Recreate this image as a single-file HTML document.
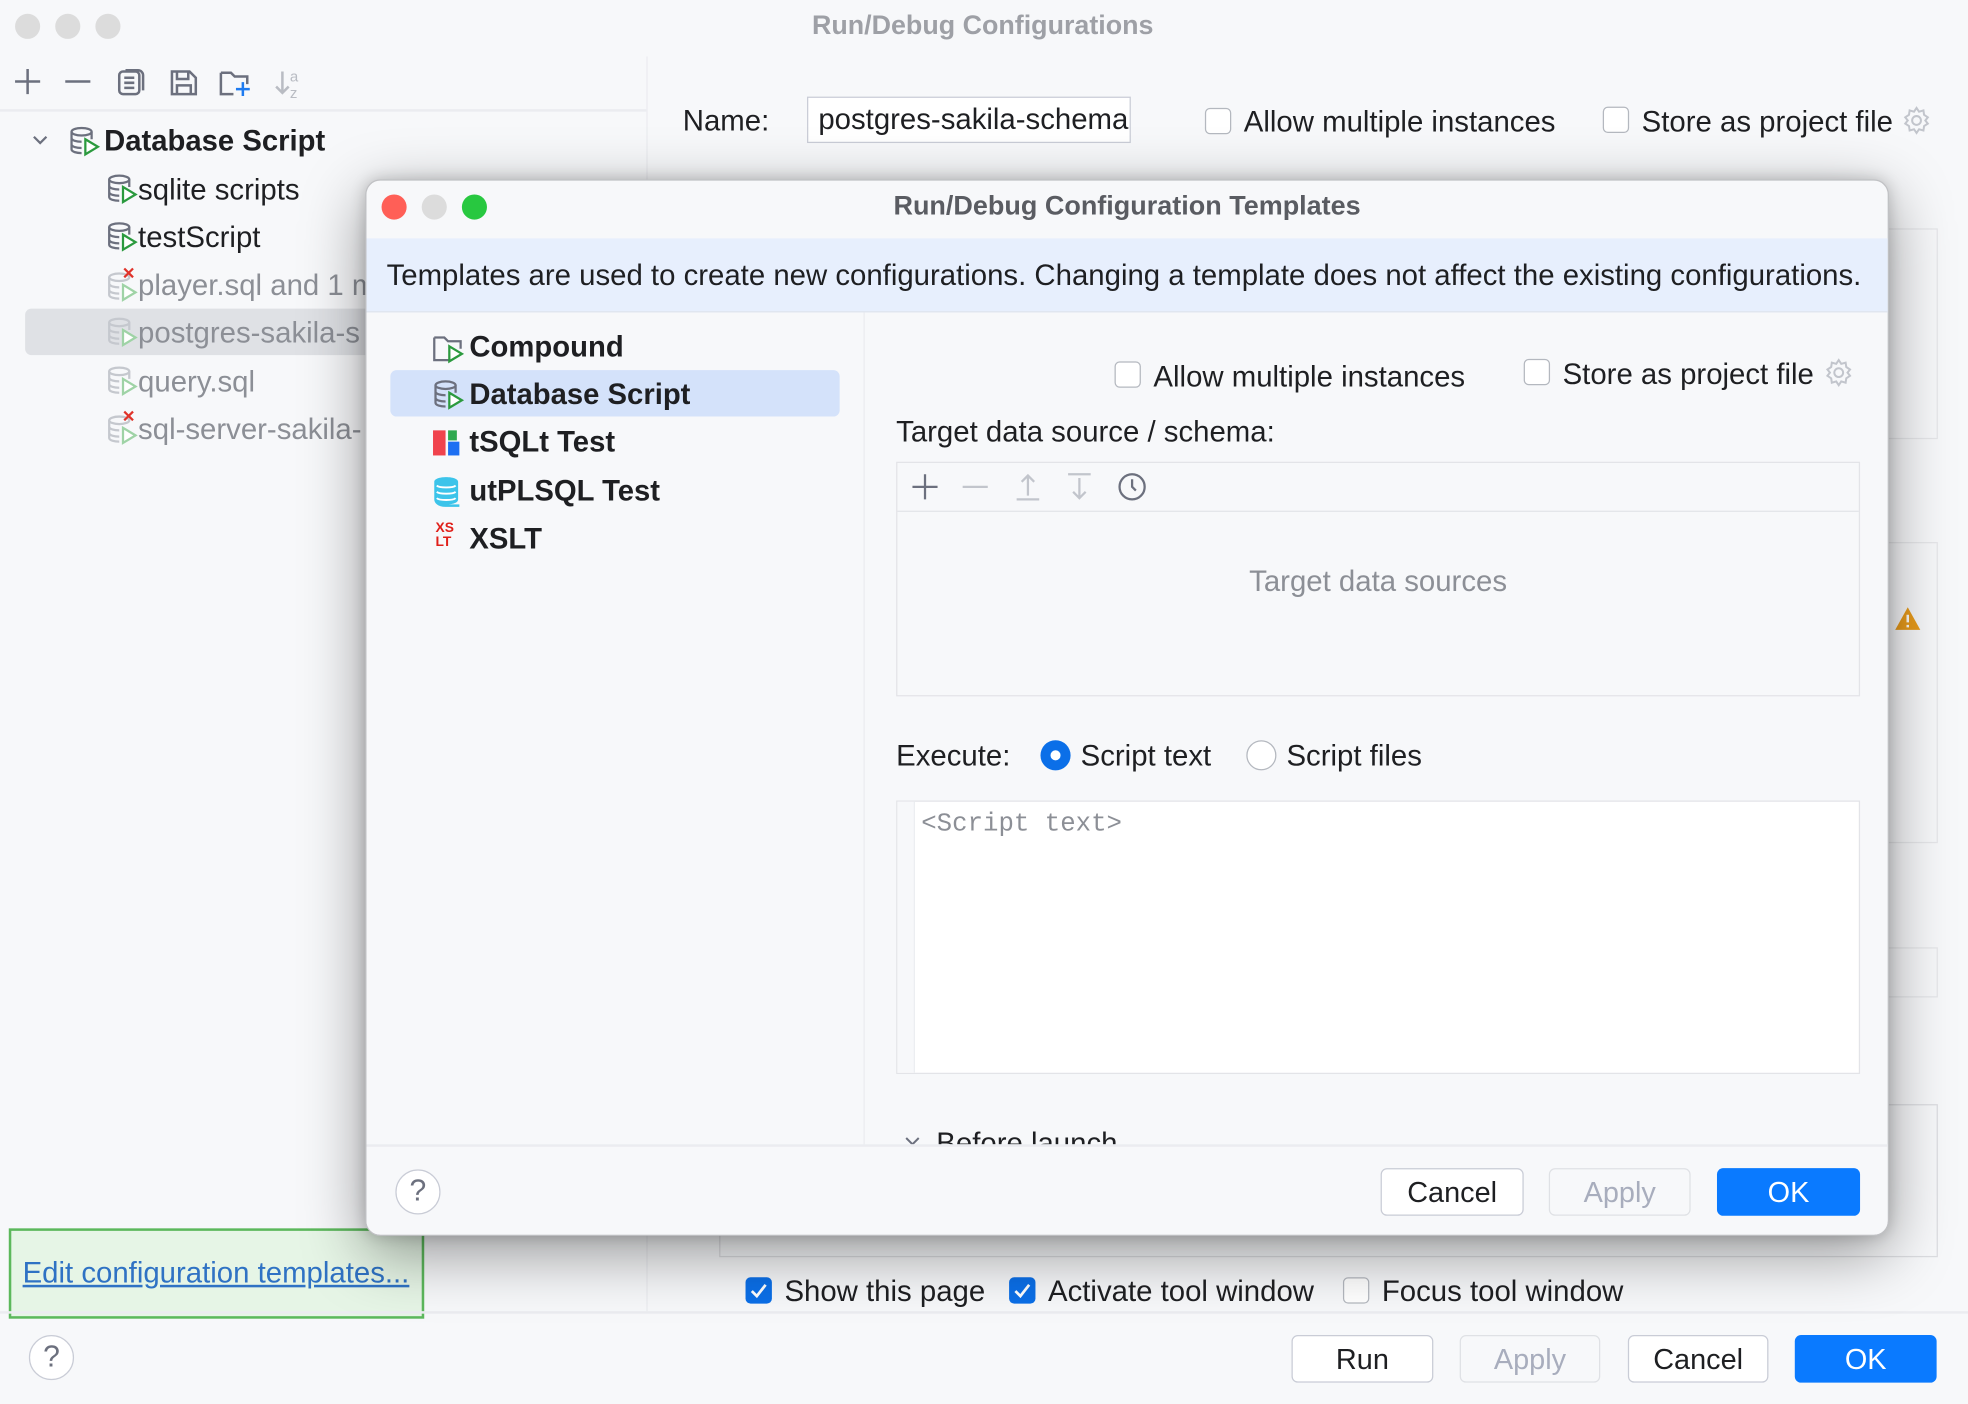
<!DOCTYPE html>
<html><head><meta charset="utf-8"><style>
*{margin:0;padding:0;box-sizing:border-box}
html,body{width:1968px;height:1404px;overflow:hidden;background:#f7f8fa}
#s{position:absolute;left:0;top:0;width:1568px;height:1119px;transform:scale(1.2551,1.2547);transform-origin:0 0;font-family:"Liberation Sans",sans-serif;color:#1e1f22;background:#f7f8fa;overflow:hidden}
.a{position:absolute}
.t{position:absolute;line-height:1;white-space:nowrap;font-size:23.4px}
.b{font-weight:bold;font-size:23.3px}
.cb{position:absolute;width:21px;height:21px;border:1.5px solid #b4b8bf;border-radius:4px;background:#fff}
.cbc{position:absolute;width:21px;height:21px;border-radius:4px;background:#0b6fe8}
.btn{position:absolute;height:38px;border:1px solid #c9ccd6;border-radius:5px;background:#fff;font-size:23px;line-height:36px;text-align:center}
.dis{background:#f7f8fa;color:#a8adbd;border-color:#dfe1e5}
.ok{background:#0a7aff;color:#fff;border:none;line-height:38px}
.help{position:absolute;width:36px;height:36px;border:1.5px solid #c9ccd6;border-radius:50%;background:#fff;text-align:center;font-size:24px;line-height:33px;color:#6c707e}
.tl{position:absolute;width:20px;height:20px;border-radius:50%}
</style></head><body><div id="s">

<div class="tl" style="left:12px;top:11px;background:#dcdcdc"></div>
<div class="tl" style="left:44px;top:11px;background:#dcdcdc"></div>
<div class="tl" style="left:76px;top:11px;background:#dcdcdc"></div>
<div class="t b" style="left:0;width:1566px;text-align:center;top:10px;font-size:21.4px;color:#9ea0a6">Run/Debug Configurations</div>

<div class="a" style="left:515px;top:45px;width:1px;height:1000px;background:#ebecf0"></div>
<div class="a" style="left:0;top:87px;width:515px;height:2px;background:#ebecf0"></div>

<svg class="a" style="left:0;top:48px" width="260" height="34" fill="none" stroke="#6c707e" stroke-width="2">
<path d="M12 17h20M22 7v20"/><path d="M52 17h20"/>
<rect x="95" y="9" width="16" height="18" rx="3"/><path d="M100 8h10a4 4 0 0 1 4 4v12"/><path d="M99 14h8M99 18h8M99 22h8"/>
<path d="M137 9h14l5 5v13h-19z"/><path d="M141 9v6h9V9M141 27v-7h11v7"/>
<path d="M176 10h8l3 3h10v6M186 27h-10V10"/><path d="M188 23h11M193.5 17.5v11" stroke="#1e7bf0"/>
<path d="M225 9v17m-5-5 5 5 5-5" stroke="#b9bcc3"/><text x="231" y="17" font-size="12" fill="#b9bcc3" stroke="none" font-family="Liberation Sans">a</text><text x="231" y="30" font-size="12" fill="#b9bcc3" stroke="none" font-family="Liberation Sans">z</text>
</svg>

<svg class="a" style="left:24px;top:104px" width="16" height="16" fill="none" stroke="#6c707e" stroke-width="1.8"><path d="M3 5l5 5 5-5"/></svg>
<svg class="a" style="left:54px;top:100px" width="28" height="26"><g fill="none" stroke="#6c707e" stroke-width="1.8"><ellipse cx="11" cy="5" rx="8" ry="3"/><path d="M3 5v14c0 2 4 3 8 3M19 5v6M3 10c0 2 4 3 8 3M3 15c0 2 4 3 8 3"/></g><path d="M14 11l10 6-10 6z" fill="#fff" stroke="#2b9a3e" stroke-width="1.8"/></svg>
<div class="t b" style="left:83px;top:101px">Database Script</div>

<div class="a" style="left:20px;top:246px;width:300px;height:37px;background:#dfe1e5;border-radius:5px"></div>

<svg class="a" style="left:84px;top:138px" width="28" height="26"><g fill="none" stroke="#6c707e" stroke-width="1.8"><ellipse cx="11" cy="5" rx="8" ry="3"/><path d="M3 5v14c0 2 4 3 8 3M19 5v6M3 10c0 2 4 3 8 3M3 15c0 2 4 3 8 3"/></g><path d="M14 11l10 6-10 6z" fill="#fff" stroke="#2b9a3e" stroke-width="1.8"/></svg>
<div class="t" style="left:110px;top:140px">sqlite scripts</div>
<svg class="a" style="left:84px;top:176px" width="28" height="26"><g fill="none" stroke="#6c707e" stroke-width="1.8"><ellipse cx="11" cy="5" rx="8" ry="3"/><path d="M3 5v14c0 2 4 3 8 3M19 5v6M3 10c0 2 4 3 8 3M3 15c0 2 4 3 8 3"/></g><path d="M14 11l10 6-10 6z" fill="#fff" stroke="#2b9a3e" stroke-width="1.8"/></svg>
<div class="t" style="left:110px;top:178px">testScript</div>
<svg class="a" style="left:84px;top:212px" width="28" height="30"><g fill="none" stroke="#c5c8ce" stroke-width="1.8"><ellipse cx="11" cy="9" rx="8" ry="3"/><path d="M3 9v14c0 2 4 3 8 3M3 14c0 2 4 3 8 3M3 19c0 2 4 3 8 3"/></g><path d="M14 15l10 6-10 6z" fill="#fff" stroke="#9fd3a6" stroke-width="1.8"/><path d="M15 2l7 7M22 2l-7 7" stroke="#e0332a" stroke-width="1.8"/></svg>
<div class="t" style="left:110px;top:216px;color:#8c8f96">player.sql and 1 m</div>
<svg class="a" style="left:84px;top:252px" width="28" height="26"><g fill="none" stroke="#c5c8ce" stroke-width="1.8"><ellipse cx="11" cy="5" rx="8" ry="3"/><path d="M3 5v14c0 2 4 3 8 3M19 5v6M3 10c0 2 4 3 8 3M3 15c0 2 4 3 8 3"/></g><path d="M14 11l10 6-10 6z" fill="#fff" stroke="#9fd3a6" stroke-width="1.8"/></svg>
<div class="t" style="left:110px;top:254px;color:#8c8f96">postgres-sakila-s</div>
<svg class="a" style="left:84px;top:291px" width="28" height="26"><g fill="none" stroke="#c5c8ce" stroke-width="1.8"><ellipse cx="11" cy="5" rx="8" ry="3"/><path d="M3 5v14c0 2 4 3 8 3M19 5v6M3 10c0 2 4 3 8 3M3 15c0 2 4 3 8 3"/></g><path d="M14 11l10 6-10 6z" fill="#fff" stroke="#9fd3a6" stroke-width="1.8"/></svg>
<div class="t" style="left:110px;top:293px;color:#8c8f96">query.sql</div>
<svg class="a" style="left:84px;top:326px" width="28" height="30"><g fill="none" stroke="#c5c8ce" stroke-width="1.8"><ellipse cx="11" cy="9" rx="8" ry="3"/><path d="M3 9v14c0 2 4 3 8 3M3 14c0 2 4 3 8 3M3 19c0 2 4 3 8 3"/></g><path d="M14 15l10 6-10 6z" fill="#fff" stroke="#9fd3a6" stroke-width="1.8"/><path d="M15 2l7 7M22 2l-7 7" stroke="#e0332a" stroke-width="1.8"/></svg>
<div class="t" style="left:110px;top:331px;color:#8c8f96">sql-server-sakila-</div>

<div class="t" style="left:544px;top:85px">Name:</div>
<div class="a" style="left:643px;top:77px;width:258px;height:37px;border:1.5px solid #c9ccd6;background:#fff;overflow:hidden"><div class="t" style="left:8px;top:6px">postgres-sakila-schema</div></div>
<div class="cb" style="left:960px;top:86px"></div>
<div class="t" style="left:991px;top:86px">Allow multiple instances</div>
<div class="cb" style="left:1277px;top:85px"></div>
<div class="t" style="left:1308px;top:86px">Store as project file</div>
<svg class="a" style="left:1515px;top:84px" width="24" height="24" fill="none" stroke="#c2c5cc" stroke-width="1.6"><circle cx="12" cy="12" r="3.5"/><path d="M12 2l2 3 3.5-1 .5 3.5 3 2-2 2.5 2 2.5-3 2-.5 3.5-3.5-1-2 3-2-3-3.5 1-.5-3.5-3-2 2-2.5-2-2.5 3-2 .5-3.5 3.5 1z"/></svg>

<div class="a" style="left:1490px;top:182px;width:54px;height:168px;border:1px solid #e6e7ea"></div>
<div class="a" style="left:1490px;top:432px;width:54px;height:240px;border:1px solid #e6e7ea"></div>
<div class="a" style="left:1490px;top:755px;width:54px;height:40px;border:1px solid #e6e7ea"></div>
<svg class="a" style="left:1509px;top:483px" width="22" height="20"><path d="M11 1L21 19H1z" fill="#e89b1c"/><path d="M11 7v6M11 15v2" stroke="#fff" stroke-width="2"/></svg>
<div class="a" style="left:573px;top:880px;width:971px;height:122px;border:1px solid #dcdde1"></div>

<div class="a" style="left:7px;top:979px;width:331px;height:72px;border:2px solid #5cb85c;background:#e6f5e6"></div>
<div class="t" style="left:18px;top:1003px;color:#2f72c4;text-decoration:underline">Edit configuration templates...</div>

<div class="cbc" style="left:594px;top:1018px"></div><svg class="a" style="left:594px;top:1018px" width="21" height="21" fill="none" stroke="#fff" stroke-width="2.2"><path d="M5 11l4 4 7-9"/></svg>
<div class="t" style="left:625px;top:1018px">Show this page</div>
<div class="cbc" style="left:804px;top:1018px"></div><svg class="a" style="left:804px;top:1018px" width="21" height="21" fill="none" stroke="#fff" stroke-width="2.2"><path d="M5 11l4 4 7-9"/></svg>
<div class="t" style="left:835px;top:1018px">Activate tool window</div>
<div class="cb" style="left:1070px;top:1018px"></div>
<div class="t" style="left:1101px;top:1018px">Focus tool window</div>
<div class="a" style="left:0;top:1045px;width:1568px;height:2px;background:#ebecf0"></div>
<div class="help" style="left:23px;top:1064px">?</div>
<div class="btn" style="left:1029px;top:1064px;width:113px">Run</div>
<div class="btn dis" style="left:1163px;top:1064px;width:112px">Apply</div>
<div class="btn" style="left:1297px;top:1064px;width:112px">Cancel</div>
<div class="btn ok" style="left:1430px;top:1064px;width:113px">OK</div>

<div class="a" style="left:291px;top:143px;width:1214px;height:842px;background:#f7f8fa;border-radius:12px;border:1px solid #c0c1c4;box-shadow:0 14px 50px rgba(0,0,0,0.4),0 0 12px rgba(0,0,0,0.18);overflow:hidden">
 <div class="tl" style="left:12px;top:11px;background:#ff5f57"></div>
 <div class="tl" style="left:44px;top:11px;background:#dcdcdc"></div>
 <div class="tl" style="left:76px;top:11px;background:#28c840"></div>
 <div class="t b" style="left:0;width:1212px;text-align:center;top:10px;font-size:21.5px;color:#5a5c62">Run/Debug Configuration Templates</div>
 <div class="a" style="left:0;top:46px;width:1214px;height:59px;background:#e7effd;border-bottom:1px solid #dfe4ee"></div>
 <div class="t" style="left:16px;top:64px">Templates are used to create new configurations. Changing a template does not affect the existing configurations.</div>

 <div class="a" style="left:396px;top:105px;width:1px;height:665px;background:#ebecf0"></div>
 <svg class="a" style="left:52px;top:121px" width="28" height="26"><path d="M2 4h8l3 3h10v6M15 22H2V4" fill="none" stroke="#6c707e" stroke-width="1.8"/><path d="M14 11l10 6-10 6z" fill="#fff" stroke="#2b9a3e" stroke-width="1.8"/></svg>
 <div class="t b" style="left:82px;top:121px">Compound</div>
 <div class="a" style="left:19px;top:151px;width:358px;height:37px;background:#d4e2fa;border-radius:5px"></div>
 <svg class="a" style="left:52px;top:158px" width="28" height="26"><g fill="none" stroke="#6c707e" stroke-width="1.8"><ellipse cx="11" cy="5" rx="8" ry="3"/><path d="M3 5v14c0 2 4 3 8 3M19 5v6M3 10c0 2 4 3 8 3M3 15c0 2 4 3 8 3"/></g><path d="M14 11l10 6-10 6z" fill="#fff" stroke="#2b9a3e" stroke-width="1.8"/></svg>
 <div class="t b" style="left:82px;top:159px">Database Script</div>
 <svg class="a" style="left:53px;top:198px" width="24" height="22"><rect x="0" y="1" width="10" height="20" fill="#f0434d"/><rect x="12" y="1" width="7" height="8" fill="#2fa84f"/><rect x="12" y="10" width="9" height="11" fill="#1d6ff2"/></svg>
 <div class="t b" style="left:82px;top:197px">tSQLt Test</div>
 <svg class="a" style="left:53px;top:235px" width="24" height="26"><path d="M1 5c0-5 19-5 19 0v14c0 3-5 4-9 4h10v2H10C4 25 1 22 1 19z" fill="#3cc4ea"/><path d="M3 8c2 2 13 2 15 0M3 13c2 2 13 2 15 0M3 18c2 2 13 2 15 0" stroke="#fff" stroke-width="1.5" fill="none"/></svg>
 <div class="t b" style="left:82px;top:236px">utPLSQL Test</div>
 <div class="a" style="left:55px;top:272px;font-size:11px;font-weight:bold;line-height:11px;color:#e0201a">XS<br>LT</div>
 <div class="t b" style="left:82px;top:274px">XSLT</div>

 <div class="cb" style="left:596px;top:144px"></div>
 <div class="t" style="left:627px;top:145px">Allow multiple instances</div>
 <div class="cb" style="left:922px;top:142px"></div>
 <div class="t" style="left:953px;top:143px">Store as project file</div>
 <svg class="a" style="left:1161px;top:141px" width="24" height="24" fill="none" stroke="#c2c5cc" stroke-width="1.6"><circle cx="12" cy="12" r="3.5"/><path d="M12 2l2 3 3.5-1 .5 3.5 3 2-2 2.5 2 2.5-3 2-.5 3.5-3.5-1-2 3-2-3-3.5 1-.5-3.5-3-2 2-2.5-2-2.5 3-2 .5-3.5 3.5 1z"/></svg>
 <div class="t" style="left:422px;top:189px">Target data source / schema:</div>
 <div class="a" style="left:422px;top:224px;width:768px;height:187px;border:1px solid #e3e4e8;background:#f7f8fa">
  <div class="a" style="left:0;top:38px;width:766px;height:1px;background:#e3e4e8"></div>
  <svg class="a" style="left:0;top:0" width="220" height="38" fill="none" stroke-width="1.8"><path d="M12 19h20M22 9v20" stroke="#6c707e"/><path d="M52 19h20" stroke="#c2c5cc"/><path d="M95 29h18M104 26V10m-5 5 5-5 5 5" stroke="#c2c5cc"/><path d="M136 9h18M145 12v16m-5-5 5 5 5-5" stroke="#c2c5cc"/><circle cx="187" cy="19" r="10" stroke="#6c707e"/><path d="M187 13v6l3 3" stroke="#6c707e"/></svg>
  <div class="t" style="left:0;width:766px;text-align:center;top:83px;color:#8c8f96">Target data sources</div>
 </div>
 <div class="t" style="left:422px;top:447px">Execute:</div>
 <div class="a" style="left:537px;top:446px;width:24px;height:24px;border-radius:50%;background:#0b6fe8"></div>
 <div class="a" style="left:545px;top:454px;width:8px;height:8px;border-radius:50%;background:#fff"></div>
 <div class="t" style="left:569px;top:447px">Script text</div>
 <div class="a" style="left:701px;top:446px;width:24px;height:24px;border-radius:50%;border:1.5px solid #b4b8bf;background:#fff"></div>
 <div class="t" style="left:733px;top:447px">Script files</div>
 <div class="a" style="left:422px;top:494px;width:768px;height:218px;border:1px solid #e3e4e8;background:#fff">
  <div class="a" style="left:0;top:0;width:14px;height:216px;background:#f7f8fa;border-right:1px solid #eceef1"></div>
  <div class="t" style="left:19px;top:9px;font-family:'Liberation Mono',monospace;font-size:20.5px;color:#8c8f96">&lt;Script text&gt;</div>
 </div>
 <svg class="a" style="left:427px;top:760px" width="16" height="12" fill="none" stroke="#6c707e" stroke-width="1.6"><path d="M3 3l5 5 5-5"/></svg>
 <div class="t" style="left:454px;top:756px">Before launch</div>
 <div class="a" style="left:0;top:768px;width:1214px;height:74px;background:#f7f8fa;border-top:2px solid #ebecf0"></div>
 <div class="help" style="left:23px;top:788px">?</div>
 <div class="btn" style="left:808px;top:787px;width:114px">Cancel</div>
 <div class="btn dis" style="left:942px;top:787px;width:113px">Apply</div>
 <div class="btn ok" style="left:1076px;top:787px;width:114px">OK</div>
</div>

</div></body></html>
